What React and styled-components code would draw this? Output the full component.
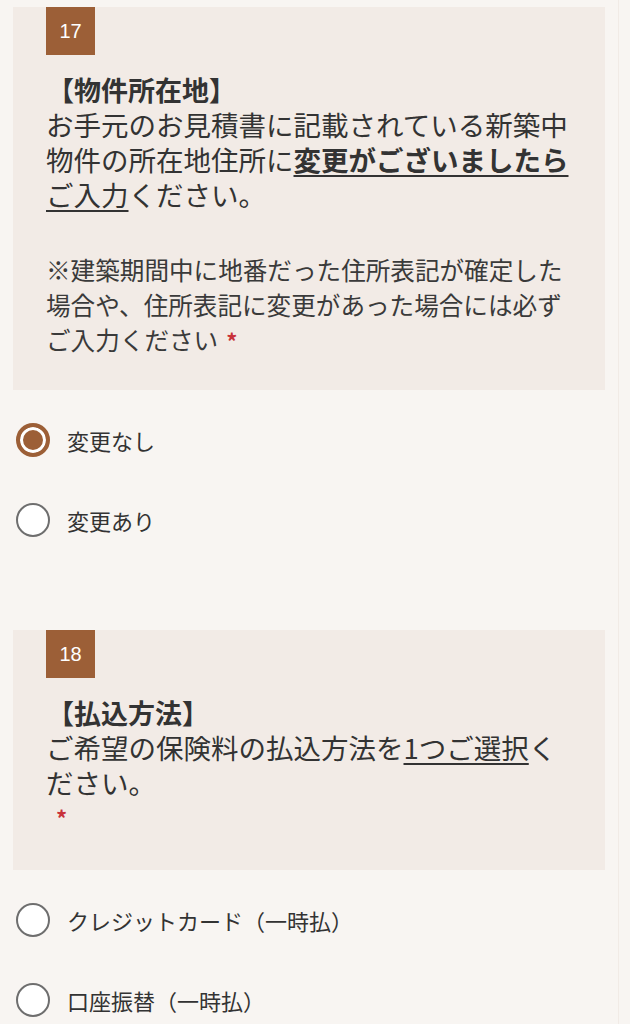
import React, { useState } from "react";
import styled, { createGlobalStyle } from "styled-components";

const GlobalStyle = createGlobalStyle`
  html, body {
    margin: 0;
    padding: 0;
    background: #f8f5f2;
  }
  body {
    font-family: "Noto Sans CJK JP", "Noto Sans", sans-serif;
    color: #333;
  }
`

const Page = styled.div`
  width: 619px;
  min-height: 1024px;
  padding-top: 7px;
  border-right: 1px solid #f1ebe6;
  box-sizing: border-box;
`

const Question = styled.section`
  margin: 0 0 ${(p) => p.$gap}px 13px;
`

const Card = styled.div`
  width: 592px;
  box-sizing: border-box;
  background: #f2ebe6;
  padding: 0 33px ${(p) => p.$bottom}px 33px;
`

const Badge = styled.div`
  width: 49px;
  height: 48px;
  background: #9c5f37;
  color: #fff;
  font-family: "Liberation Sans", Arial, sans-serif;
  font-size: 20px;
  display: flex;
  align-items: center;
  justify-content: center;
  margin-bottom: 17px;
`

const Title = styled.div`
  font-weight: 700;
  font-size: 27px;
  line-height: 35px;
  margin-left: 1px;
`

const Body = styled.div`
  font-size: 27.5px;
  line-height: 35px;
  color: #333;
`

const Note = styled.div`
  font-size: 24.6px;
  line-height: 35px;
  margin-top: 40px;
  color: #3a3a3a;
`

const Strong = styled.span`
  font-weight: 700;
  text-decoration: underline;
  text-underline-offset: 4px;
  text-decoration-thickness: 2px;
`

const Under = styled.span`
  text-decoration: underline;
  text-underline-offset: 4px;
  text-decoration-thickness: 1.5px;
`

const Required = styled.span`
  color: #c8323a;
  font-size: 22px;
  font-weight: 700;
  display: ${(p) => (p.$block ? "block" : "inline")};
  margin-left: ${(p) => (p.$block ? "10px" : "8px")};
  line-height: 35px;
`

const Options = styled.div`
  padding-top: 10px;
  margin-left: 3px;
`

const Option = styled.label`
  display: flex;
  align-items: center;
  gap: 17px;
  padding: 23px 0;
  cursor: pointer;
`

const Circle = styled.span`
  width: 34px;
  height: 34px;
  box-sizing: border-box;
  border-radius: 50%;
  flex-shrink: 0;
  background: ${(p) => (p.$checked ? "#9c5f37" : "#fff")};
  border: ${(p) => (p.$checked ? "4px solid #9c5f37" : "2px solid #6e6e6e")};
  box-shadow: ${(p) => (p.$checked ? "inset 0 0 0 3px #fff" : "none")};
`

const Label = styled.span`
  font-size: 22px;
  color: #333;
`

function RadioGroup({ options, value, onChange }) {
  return (
    <Options>
      {options.map((o) => (
        <Option key={o} onClick={() => onChange(o)}>
          <Circle $checked={value === o} />
          <Label>{o}</Label>
        </Option>
      ))}
    </Options>
  );
}

export default function App() {
  const [address, setAddress] = useState("変更なし");
  const [payment, setPayment] = useState("");

  return (
    <>
      <GlobalStyle />
      <Page>
        <Question $gap={70}>
          <Card $bottom={32}>
            <Badge>17</Badge>
            <Title>【物件所在地】</Title>
            <Body>
              お手元のお見積書に記載されている新築中物件の所在地住所に
              <Strong>変更がございましたら</Strong>
              <Under>ご入力</Under>ください。
            </Body>
            <Note>
              ※建築期間中に地番だった住所表記が確定した場合や、住所表記に変更があった場合には必ずご入力ください
              <Required>*</Required>
            </Note>
          </Card>
          <RadioGroup
            options={["変更なし", "変更あり"]}
            value={address}
            onChange={setAddress}
          />
        </Question>

        <Question $gap={0}>
          <Card $bottom={35}>
            <Badge>18</Badge>
            <Title>【払込方法】</Title>
            <Body>
              ご希望の保険料の払込方法を<Under>1つご選択</Under>ください。
            </Body>
            <Required $block>*</Required>
          </Card>
          <RadioGroup
            options={["クレジットカード（一時払）", "口座振替（一時払）"]}
            value={payment}
            onChange={setPayment}
          />
        </Question>
      </Page>
    </>
  );
}
